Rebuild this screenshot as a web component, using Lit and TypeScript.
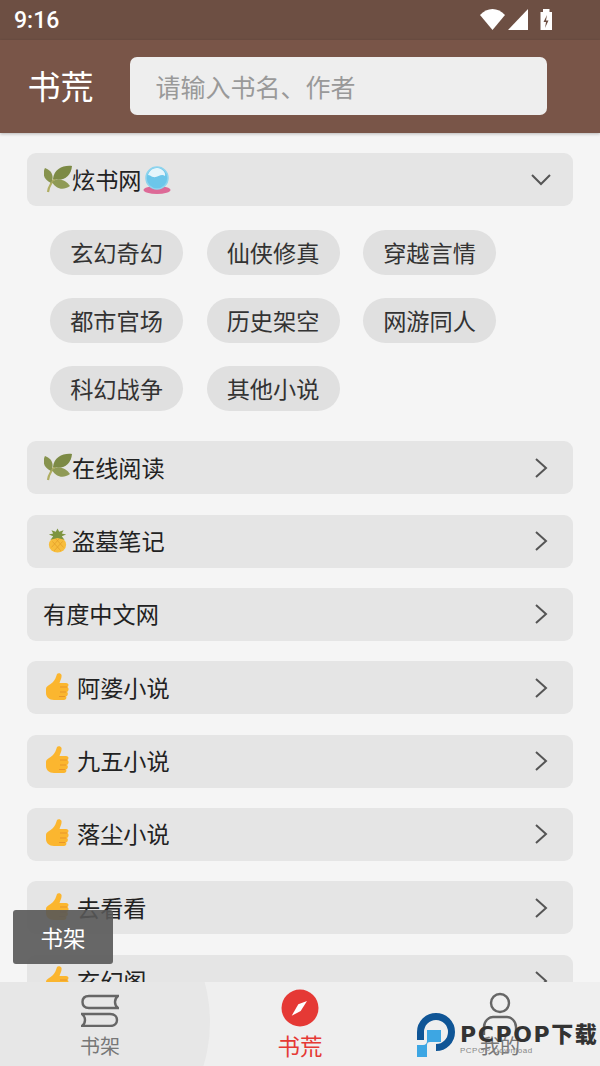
import { LitElement, html, css, svg } from "lit";
import { customElement } from "lit/decorators.js";

const leaf = html`<svg class="emoji leaf" viewBox="0 0 28 28">
  <path d="M4 27 C5 20 8 16 13 12" fill="none" stroke="#b0ae62" stroke-width="2.2"/>
  <path d="M9 14 C10 4 19 0 28 1 C27 11 20 17 9 14Z" fill="#7c8a45"/>
  <path d="M7 18 C0 15 -2 9 1 3 C7 5 11 11 7 18Z" fill="#87934e"/>
  <path d="M8 17 C14 12 22 15 26 21 C19 26 12 24 8 17Z" fill="#8f9a55"/>
</svg>`;

const ball = html`<svg class="emoji ball" viewBox="0 0 28 28">
  <ellipse cx="14" cy="24" rx="13.5" ry="4" fill="#dd6a97"/>
  <circle cx="14" cy="12" r="11" fill="#6cc6ea" stroke="#8ed4ee" stroke-width="1.5"/>
  <path d="M5 9 C7 3 11 2 15 2 C20 3 23 7 22 10 C18 7 15 12 10 11 C8 10.5 7 9 5 9Z" fill="#e4f5fb"/>
</svg>`;

const pineapple = html`<svg class="emoji pine" viewBox="0 0 22 28">
  <ellipse cx="11" cy="19" rx="10" ry="9" fill="#f7bd3c"/>
  <path d="M5 15 L15 26 M9 12 L18 22 M17 15 L7 26 M13 12 L4 22" stroke="#e09b28" stroke-width=".8"/>
  <path d="M11 0 L13 4 L18 2 L16 6 L21 7 L16 9 L19 13 L11 11 L3 13 L6 9 L1 7 L6 6 L4 2 L9 4Z" fill="#7d9440"/>
</svg>`;

const thumb = html`<svg class="emoji thumb" viewBox="0 0 24 28">
  <path d="M1 16 C1 13 5 12 8 9 C10 7 11 4 12 1 C13 -.5 16 0 16.5 2 C17 5 15 8 14.5 10 L21 10 C24 10 24 13 22.5 14 C24 15 24 18 22 19 C23.5 20 23 23 21 23.5 C22 25 21 27 19 27 L9 27 C4 27 1 24 1 20Z" fill="#fbb62f"/>
  <path d="M15 14 H22 M15 19 H21 M14 23.5 H20" fill="none" stroke="#e8952a" stroke-width="1"/>
</svg>`;

const chevron = (down: boolean) => html`<svg class=${down ? "chev down" : "chev"} viewBox="0 0 20 20">
  ${svg`<path d=${down ? "M1 6 L10 15 L19 6" : "M5 1 L15 10 L5 19"} fill="none" stroke="#555" stroke-width="2"/>`}
</svg>`;

const chips = ["玄幻奇幻", "仙侠修真", "穿越言情", "都市官场", "历史架空", "网游同人", "科幻战争", "其他小说"];

const rows = [
  { icon: leaf, name: "在线阅读" },
  { icon: pineapple, name: "盗墓笔记" },
  { icon: null, name: "有度中文网" },
  { icon: thumb, name: "阿婆小说" },
  { icon: thumb, name: "九五小说" },
  { icon: thumb, name: "落尘小说" },
  { icon: thumb, name: "去看看" },
  { icon: thumb, name: "玄幻阁" },
];

@customElement("app-root")
export class AppRoot extends LitElement {
  render() {
    return html`
      <div class="status">
        <span class="time">9:16</span>
        <svg class="sys" width="72" height="22" viewBox="0 0 72 22">
          <path d="M0 6 C7 -2 18 -2 25 6 L12.5 21Z" fill="#fff"/>
          <path d="M48 0 V21 H28Z" fill="#fff"/>
          <path d="M60.5 3 H63 V0 H69.5 V3 H72 V21 H60.5Z" fill="#fff"/>
          <path d="M67 6 L63.5 13 H66 L65 19 L68.5 11.5 H66Z" fill="#6d4f43"/>
        </svg>
      </div>
      <header>
        <span class="title">书荒</span>
        <div class="search">请输入书名、作者</div>
      </header>
      <main>
        <div class="row">
          ${leaf}<span>炫书网</span>${ball}<i></i>${chevron(true)}
        </div>
        <div class="chips">
          ${chips.map((c) => html`<span class="chip">${c}</span>`)}
        </div>
        ${rows.map(
          (r) => html`<div class="row">
            ${r.icon}<span>${r.name}</span><i></i>${chevron(false)}
          </div>`
        )}
      </main>
      <nav>
        <div class="ripple"></div>
        <div class="tab">
          <svg width="38" height="38" viewBox="0 0 38 38" fill="none" stroke="#666" stroke-width="2.4">
            <path d="M37 7 H8 C3 7 1.5 10 1.5 13 C1.5 16 3 19 8 19 H37 C33 16 33 10 37 7Z"/>
            <path d="M1 25 H29 C34 25 36 28 36 31 C36 34 34 37 29 37 H1 C5 34 5 28 1 25Z"/>
          </svg>
          <span>书架</span>
        </div>
        <div class="tab active">
          <svg width="38" height="38" viewBox="0 0 38 38">
            <circle cx="19" cy="19" r="18.5" fill="#e53935"/>
            <path d="M26 12 L19.7 22 L10.7 26.7 L17.3 15.3Z" fill="#fff"/>
          </svg>
          <span>书荒</span>
        </div>
        <div class="tab">
          <svg class="person" width="38" height="38" viewBox="0 0 38 38" fill="none" stroke="#666" stroke-width="2.4">
            <circle cx="19" cy="14" r="9"/>
            <path d="M3 46 V38 C3 32 8 28 12 28 H26 C30 28 35 32 35 38 V46"/>
          </svg>
          <span>我的</span>
        </div>
      </nav>
      <div class="toast">书架</div>
      <div class="mark">
        <svg width="40" height="44" viewBox="0 0 40 44">
          <path d="M3.5 27 V19 A15.5 15.5 0 1 1 19 34.5" fill="none" stroke="#0f5596" stroke-width="7"/>
          <path d="M10 17 H24 V29 H13 C11 29 10 30 10 32 V44 H0 V32 H6 C9 32 10 30 10 28Z" fill="#3da6e3"/>
        </svg>
        <div class="mark-text">
          <b>PCPOP下载</b>
          <small>PCPOP Download</small>
        </div>
      </div>
    `;
  }

  static styles = css`
    :host {
      display: flex;
      flex-direction: column;
      position: relative;
      width: 600px;
      height: 1066px;
      overflow: hidden;
      background: #f5f5f5;
      color: #222;
      font-family: "Noto Sans CJK SC", "Noto Sans", sans-serif;
    }

    .status {
      flex: none;
      height: 40px;
      background: #6d4f43;
      display: flex;
      align-items: center;
      justify-content: space-between;
      padding: 0 48px 0 14px;
    }

    .time {
      color: #fff;
      font: 500 23px Roboto, sans-serif;
    }

    .sys {
      display: block;
    }

    header {
      flex: none;
      height: 93px;
      box-sizing: border-box;
      padding: 0 0 2px 27.5px;
      background: #795548;
      display: flex;
      align-items: center;
      box-shadow: 0 1px 3px rgba(0, 0, 0, 0.25);
      position: relative;
    }

    .title {
      width: 102.5px;
      color: #fff;
      font-size: 33px;
      line-height: 1;
    }

    .search {
      width: 391.5px;
      height: 58px;
      padding-left: 25.5px;
      border-radius: 7px;
      background: #eee;
      color: #999;
      font-size: 25px;
      line-height: 58px;
    }

    main {
      flex: 1;
      min-height: 0;
      overflow: hidden;
      padding: 20px 27px 0;
    }

    .row {
      height: 53px;
      box-sizing: border-box;
      margin-bottom: 20.33px;
      padding: 0 22px 2px 16px;
      border-radius: 9px;
      background: #e5e5e5;
      display: flex;
      align-items: center;
      font-size: 23.2px;
    }

    .row i {
      flex: 1;
    }

    .chips {
      display: grid;
      grid-template-columns: repeat(3, 133px);
      column-gap: 23.5px;
      row-gap: 23px;
      padding: 4px 23px 30px;
    }

    .chip {
      height: 45px;
      box-sizing: border-box;
      padding-bottom: 2px;
      border-radius: 23px;
      background: #e0e0e0;
      display: flex;
      align-items: center;
      justify-content: center;
      font-size: 23.2px;
      color: #333;
    }

    .emoji {
      flex: none;
      display: block;
    }

    .leaf {
      width: 28px;
      height: 28px;
      margin-left: 1px;
    }

    .ball {
      width: 28px;
      height: 28px;
      margin: 2px 0 0 1px;
    }

    .pine {
      width: 19px;
      height: 27px;
      margin: 0 5px 0 5px;
    }

    .thumb {
      width: 24px;
      height: 28px;
      margin: 0 8px 0 2px;
    }

    .chev {
      width: 20px;
      height: 20px;
      margin-top: 2px;
    }

    .chev.down {
      margin-top: 0;
    }

    nav {
      flex: none;
      height: 84px;
      position: relative;
      overflow: hidden;
      background: #efefef;
      display: grid;
      grid-template-columns: repeat(3, 1fr);
    }

    .ripple {
      position: absolute;
      left: -90px;
      top: -110px;
      width: 300px;
      height: 300px;
      border-radius: 50%;
      background: #e7e7e7;
    }

    .tab {
      position: relative;
      display: flex;
      flex-direction: column;
      align-items: center;
      padding-top: 7px;
      color: #777;
      font-size: 20px;
      line-height: 28px;
    }

    .tab svg {
      display: block;
      margin-bottom: 5px;
    }

    .person {
      overflow: visible;
    }

    .tab.active {
      color: #e53935;
      font-size: 22.5px;
    }

    .tab.active svg {
      margin-bottom: 4px;
    }

    .toast {
      position: absolute;
      left: 13px;
      top: 910px;
      width: 100px;
      height: 54px;
      border-radius: 3px;
      background: rgba(88, 88, 88, 0.9);
      color: #fff;
      font-size: 22.5px;
      line-height: 54px;
      text-align: center;
    }

    .mark {
      position: absolute;
      left: 417px;
      top: 1013px;
      display: flex;
      align-items: flex-start;
      gap: 3px;
    }

    .mark svg {
      display: block;
    }

    .mark-text {
      display: flex;
      flex-direction: column;
      padding-top: 11px;
    }

    .mark-text b {
      color: #333;
      font: 900 22px "DejaVu Sans", "Noto Sans CJK SC", sans-serif;
      letter-spacing: 1.6px;
      line-height: 22px;
      white-space: nowrap;
    }

    .mark-text small {
      color: #888;
      font: 8px/10px "Liberation Sans", sans-serif;
      letter-spacing: 0.5px;
    }
  `;
}
